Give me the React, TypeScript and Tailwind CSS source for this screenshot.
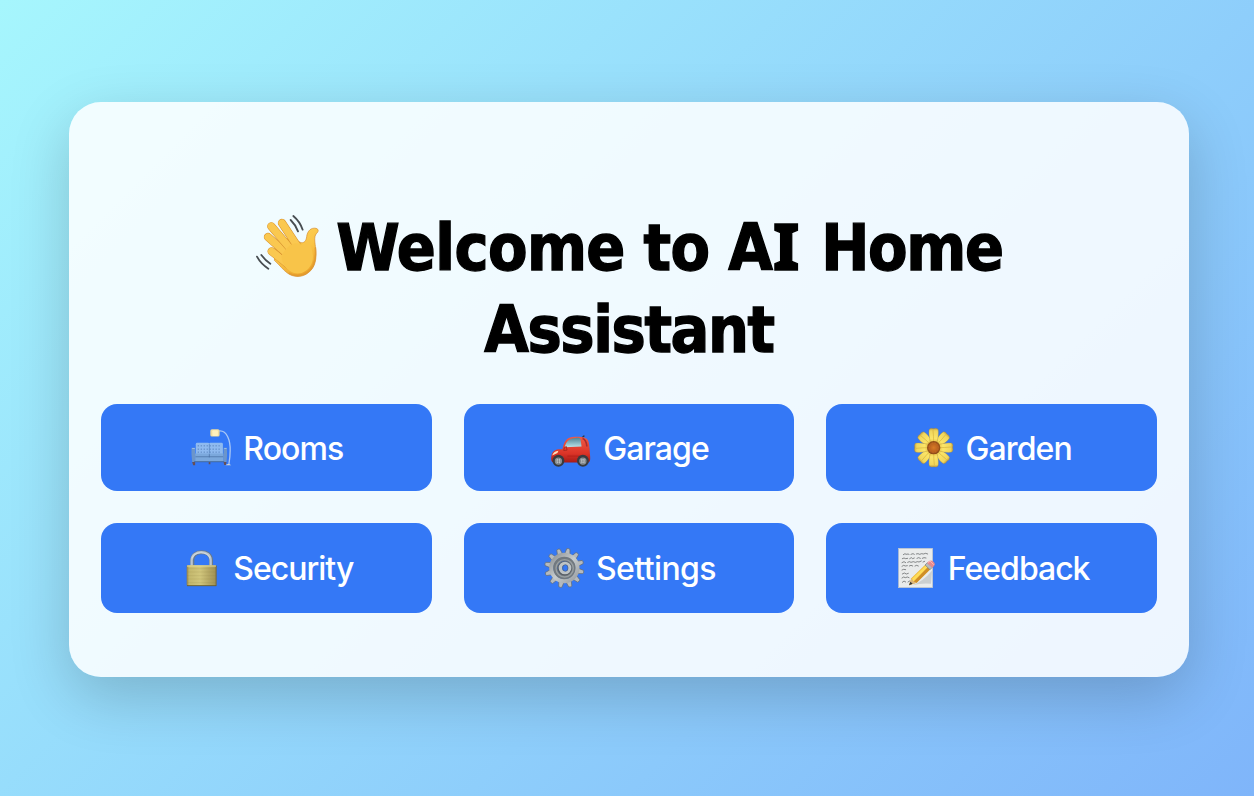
import type { ReactNode } from "react";

function Wave() {
  const fingers = [
    "M92 154L145 196",
    "M81 111L150 172",
    "M91 79L158 158",
    "M123 69L173 145",
  ];
  return (
    <svg viewBox="42 42 195 192" className="mt-0.5 h-16 w-[65px] shrink-0" aria-hidden="true">
      <defs>
        <linearGradient id="skin" x1="0" y1="0" x2="0.5" y2="1">
          <stop offset="0" stopColor="#ffd45b" />
          <stop offset="0.6" stopColor="#fac445" />
          <stop offset="1" stopColor="#eca72f" />
        </linearGradient>
      </defs>
      <path d="M107 137C125 111 149 111 180 128C190 130 196 121 197 110C199 92 211 82 225 85C235 88 232 96 226 101C218 111 222 127 224 147C227 174 224 202 202 218C184 233 158 233 139 219C126 210 116 195 100 181Z" fill="url(#skin)" stroke="#d58b2c" strokeWidth="2" />
      {fingers.map((d) => (
        <g key={d} fill="none" strokeLinecap="round">
          <path d={d} stroke="#d8902e" strokeWidth="25" />
          <path d={d} stroke="#fac850" strokeWidth="21.5" />
        </g>
      ))}
      <path d="M121 168C134 146 152 123 177 132C193 139 197 123 204 117C209 140 223 166 211 193C198 220 167 230 144 211C131 202 124 188 121 168Z" fill="#f8c449" />
      <path d="M223 142C226 180 219 204 199 217C181 229 158 229 143 219" fill="none" stroke="#df962d" strokeWidth="5" opacity="0.7" />
      <g fill="none" stroke="#484d51" strokeWidth="5.5" strokeLinecap="round">
        <path d="M149 60C158 69 166 80 171 94M157 48C171 60 180 74 185 89M61 165C69 176 77 184 88 191M48 170C56 185 68 197 82 206" />
      </g>
    </svg>
  );
}

function Sofa() {
  return (
    <svg viewBox="32 36 126 118" className="h-[39px] w-[42px] shrink-0" aria-hidden="true">
      <path d="M120 45C143 43 154 73 153 105C153 122 151 135 149 147" fill="none" stroke="#a9c7f5" strokeWidth="4" />
      <path d="M139 149Q148 141 156 149" fill="#d5d8d5" />
      <rect x="93" y="40" width="28" height="22" rx="5" fill="#f0dc9e" />
      <rect x="99" y="43" width="17" height="17" rx="3" fill="#fff0bc" />
      <path d="M38 139h9v10h-6zM88 139h5v7h-5zM133 139h9l-2 9h-5z" fill="#684f55" />
      <rect x="49" y="81" width="41" height="39" rx="4" fill="#8fbaef" />
      <rect x="89" y="81" width="42" height="39" rx="4" fill="#8fbaef" />
      <path d="M55 90h72M55 100h72M55 109h72" stroke="#4973ae" strokeWidth="3" strokeDasharray="3 6" />
      <path d="M90 84v31" stroke="#537fba" strokeWidth="2" />
      <rect x="47" y="113" width="86" height="25" fill="#7ba8dc" />
      <path d="M48 123h84M90 115v10" stroke="#446b9f" strokeWidth="2" />
      <path d="M36 96h11v43H38q-3-24-2-43M133 96h10q2 21-1 43h-9z" fill="#6c95ca" />
      <path d="M38 98h8M135 98h7" stroke="#9bbde8" strokeWidth="3" />
      <path d="M44 138h91" stroke="#446b9d" strokeWidth="3" />
    </svg>
  );
}

function Car() {
  return (
    <svg viewBox="32 36 126 124" className="h-[41px] w-[42px] shrink-0" aria-hidden="true">
      <defs>
        <linearGradient id="car-body" x1="0" y1="0" x2="0" y2="1">
          <stop offset="0" stopColor="#f05b48" />
          <stop offset="0.65" stopColor="#dc3427" />
          <stop offset="1" stopColor="#a51b18" />
        </linearGradient>
        <linearGradient id="car-glass" x1="0" y1="0" x2="0" y2="1">
          <stop offset="0" stopColor="#4f8597" />
          <stop offset="1" stopColor="#b9e2e9" />
        </linearGradient>
      </defs>
      <path d="M127 70L134 63" stroke="#26384d" strokeWidth="4" strokeLinecap="round" />
      <path d="M69 103C74 81 80 68 99 66C122 64 142 66 147 77C151 88 152 111 153 126Q154 141 148 143H42Q35 142 35 132C36 113 41 105 58 103Z" fill="url(#car-body)" />
      <path d="M76 97C81 78 88 70 109 69C120 68 123 69 124 74L127 95Z" fill="url(#car-glass)" />
      <path d="M130 71Q141 74 143 95" fill="none" stroke="#a72d2e" strokeWidth="5" />
      <path d="M73 107Q73 96 81 95L83 106Z" fill="#ed3b29" stroke="#8d211d" strokeWidth="2" />
      <path d="M38 122Q43 109 57 108L54 115Z" fill="#ffe0bd" />
      <path d="M84 124h38M85 138h35" stroke="#b62119" strokeWidth="3" />
      {[57, 131].map((x) => (
        <g key={x}>
          <circle cx={x} cy="138" r="18" fill="#383b40" />
          <circle cx={x} cy="139" r="11" fill="#8c9398" />
          <circle cx={x} cy="139" r="6" fill="#d2d7da" />
          <path d={`M${x - 9} 139h18M${x} 130v18`} stroke="#6c7175" strokeWidth="2" />
        </g>
      ))}
    </svg>
  );
}

function Flower() {
  return (
    <svg viewBox="37 36 126 126" className="size-[42px] shrink-0" aria-hidden="true">
      <defs>
        <radialGradient id="flower-core">
          <stop offset="0" stopColor="#d87b26" />
          <stop offset="0.65" stopColor="#b9611f" />
          <stop offset="1" stopColor="#854616" />
        </radialGradient>
        <linearGradient id="petal" x1="0" y1="0" x2="0" y2="1">
          <stop offset="0" stopColor="#c3a044" />
          <stop offset="0.15" stopColor="#f0d65b" />
          <stop offset="0.6" stopColor="#fbe568" />
          <stop offset="1" stopColor="#dca931" />
        </linearGradient>
      </defs>
      {[45, 135, 225, 315, 0, 90, 180, 270].map((angle) => (
        <g key={angle} transform={`rotate(${angle} 99 98)`}>
          <path d="M92 91C86 73 83 52 86 43Q91 38 98 41Q106 38 112 43C115 54 112 76 106 91Z" fill="url(#petal)" stroke="#a48231" strokeWidth="1" />
          <path d="M97 45Q99 65 99 85" fill="none" stroke="#d6b23c" strokeWidth="2" />
        </g>
      ))}
      <circle cx="99" cy="98" r="20" fill="url(#flower-core)" />
      <circle cx="99" cy="98" r="14" fill="none" stroke="#de8b37" strokeWidth="2" strokeDasharray="2 3" opacity="0.7" />
    </svg>
  );
}

function Lock() {
  return (
    <svg viewBox="16 36 126 126" className="size-[42px] shrink-0" aria-hidden="true">
      <defs>
        <linearGradient id="brass" x1="0" y1="0" x2="1" y2="0">
          <stop offset="0" stopColor="#8c7c49" />
          <stop offset="0.08" stopColor="#c3b76d" />
          <stop offset="0.45" stopColor="#d1c67c" />
          <stop offset="0.93" stopColor="#a49556" />
          <stop offset="1" stopColor="#756537" />
        </linearGradient>
      </defs>
      <path d="M53 93V75C54 44 108 44 109 75V93" fill="none" stroke="#687a8c" strokeWidth="12" />
      <path d="M51 92V75C52 44 107 43 108 75V92" fill="none" stroke="#b9c5cf" strokeWidth="7" />
      <path d="M53 70C56 49 98 47 106 69" fill="none" stroke="#e4e9e9" strokeWidth="2" />
      <rect x="36" y="91" width="90" height="62" rx="3" fill="url(#brass)" />
      <path d="M37 93h87" stroke="#e7dc96" strokeWidth="3" />
      <path d="M38 101h85M38 111h85M38 122h85M38 132h85M38 143h85" stroke="#83753b" strokeWidth="1" opacity="0.4" />
      <path d="M37 152h88" stroke="#686038" strokeWidth="3" />
    </svg>
  );
}

function Gear() {
  return (
    <svg viewBox="23 33 126 126" className="size-[42px] shrink-0" aria-hidden="true">
      <defs>
        <linearGradient id="steel" x1="0" y1="0" x2="1" y2="1">
          <stop offset="0" stopColor="#8d9295" />
          <stop offset="0.5" stopColor="#c6cbcd" />
          <stop offset="1" stopColor="#989da1" />
        </linearGradient>
      </defs>
      {Array.from({ length: 12 }, (_, i) => (
        <path key={i} d="M78 57L81 38Q86 35 91 38L95 57Z" transform={`rotate(${i * 30 + 13} 87 96)`} fill="#b5babe" stroke="#646c73" strokeWidth="2" />
      ))}
      <circle cx="87" cy="96" r="39" fill="none" stroke="url(#steel)" strokeWidth="13" />
      <circle cx="87" cy="96" r="27" fill="none" stroke="#72797e" strokeWidth="13" />
      <circle cx="88" cy="97" r="26" fill="none" stroke="#989fa3" strokeWidth="4" />
      <circle cx="88" cy="97" r="15" fill="none" stroke="#565d64" strokeWidth="13" />
      <circle cx="89" cy="96" r="14" fill="none" stroke="#bdc3c6" strokeWidth="10" />
      <ellipse cx="90" cy="96" rx="8" ry="10" fill="#3478f6" stroke="#525f72" strokeWidth="2" />
    </svg>
  );
}

function Memo() {
  return (
    <svg viewBox="28 36 126 126" className="size-[42px] shrink-0" aria-hidden="true">
      <rect x="39" y="40" width="102" height="118" fill="#e9ebeb" stroke="#c1c7ca" strokeWidth="2" />
      <g fill="none" stroke="#515456" strokeWidth="2" strokeLinecap="round">
        <path d="M53 59l5-3 3 2 6-1 3 1M76 58l6-2 4 2M92 57l5-1 5 2 6-2 5 1 7-2 6 2" />
        <path d="M50 71l5-2 5 2 6-1M72 71l5-3 4 3 5-2M94 70l5-2 5 2M110 70l5-2 6 1" />
        <path d="M49 83l6-3 5 3M66 82l5-2 5 2 7-2 6 2 6-2 5 1 7-3M112 81l5-2" />
        <path d="M49 94l5-3 5 2 6-1M71 93l5-2 5 2M88 93l5-2 5 2" />
        <path d="M49 105l5-2 6 1M50 117l6-3 6 3 6-2M49 129l5-3 5 2 6-2 5 2M50 142l5-4 5 3M67 141l5-3" />
      </g>
      <path d="M80 151Q112 139 139 107L136 146Q108 143 80 151" fill="#747b80" opacity="0.25" />
      <path d="M70 151L77 130L121 87L135 102L93 143Z" fill="#edb633" />
      <path d="M79 131L122 89L128 95L83 140Z" fill="#ffdc58" />
      <path d="M83 141L127 96L134 102L93 143Z" fill="#cf8e28" />
      <path d="M70 151L77 130L82 138L92 143Z" fill="#ddb77c" />
      <path d="M70 151L74 140L81 146Z" fill="#37393b" />
      <path d="M118 90L125 83L140 97L133 104Z" fill="#b7babb" stroke="#788085" strokeWidth="2" />
      <path d="M124 84L130 78Q139 73 146 83Q150 89 145 93L140 98Z" fill="#e78b90" />
      <path d="M127 83L133 78L144 89" fill="none" stroke="#ffb5b2" strokeWidth="3" />
    </svg>
  );
}

type Tile = { label: string; icon: ReactNode; tracking: string };

const tiles: Tile[] = [
  { label: "Rooms", icon: <Sofa />, tracking: "pt-[3px] tracking-[-0.9px]" },
  { label: "Garage", icon: <Car />, tracking: "pt-[3px] tracking-[-0.9px]" },
  { label: "Garden", icon: <Flower />, tracking: "pt-[3px] tracking-[-0.9px]" },
  { label: "Security", icon: <Lock />, tracking: "pt-0.5 tracking-[-1px]" },
  { label: "Settings", icon: <Gear />, tracking: "pt-px tracking-[-0.6px]" },
  { label: "Feedback", icon: <Memo />, tracking: "pt-0.5 tracking-[-1px]" },
];

export default function App() {
  return (
    <main className="flex h-[796px] w-full items-start justify-center bg-[linear-gradient(135deg,#a6f6fd_0%,#7fb5fa_100%)] pt-[102px] pl-1">
      <section className="h-[575px] w-[1120px] rounded-[32px] bg-white/86 px-8 pt-[102px] shadow-[0_20px_60px_rgba(0,0,0,0.19)]">
        <h1 className="font-['DejaVu_Sans_Condensed','DejaVu_Sans',sans-serif] text-[64px] leading-[82px] font-bold [font-stretch:condensed] whitespace-nowrap text-black [-webkit-text-stroke:1.3px_#000]">
          <span className="flex h-[82px] items-center justify-center gap-4">
            <Wave />
            <span className="pt-1.5 tracking-[-1.2px]">
              <span className="tracking-[-0.6px]">Welcome</span>{" "}
              <span className="tracking-[-0.6px]">to</span>{" "}
              A<span className="ml-px font-['Noto_Sans',sans-serif] text-[65px] leading-none font-extrabold">I</span>{" "}
              <span className="ml-1 tracking-[-1.3px]">Home</span>
            </span>
          </span>
          <span className="block h-[82px] pt-[3px] text-center tracking-[-1.4px]">Assistant</span>
        </h1>
        <div className="mt-9 grid grid-cols-3 grid-rows-[87px_90px] gap-8">
          {tiles.map((tile) => (
            <button key={tile.label} className="flex items-center justify-center gap-[11px] rounded-2xl bg-[#3478f6] pl-px font-['Inter',sans-serif] text-[32px] leading-10 font-[450] text-white">
              {tile.icon}
              <span className={tile.tracking}>{tile.label}</span>
            </button>
          ))}
        </div>
      </section>
    </main>
  );
}
